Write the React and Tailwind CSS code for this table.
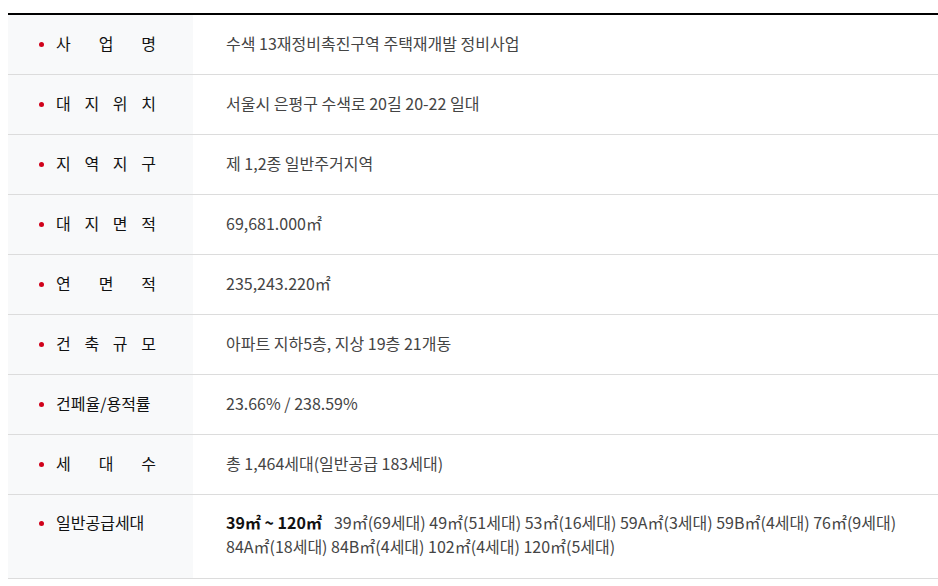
import React from "react";

const rows = [
  { label: ["사", "업", "명"], value: "수색 13재정비촉진구역 주택재개발 정비사업" },
  { label: ["대", "지", "위", "치"], value: "서울시 은평구 수색로 20길 20-22 일대" },
  { label: ["지", "역", "지", "구"], value: "제 1,2종 일반주거지역" },
  { label: ["대", "지", "면", "적"], value: "69,681.000㎡" },
  { label: ["연", "면", "적"], value: "235,243.220㎡" },
  { label: ["건", "축", "규", "모"], value: "아파트 지하5층, 지상 19층 21개동" },
  { label: ["건페율/용적률"], value: "23.66% / 238.59%" },
  { label: ["세", "대", "수"], value: "총 1,464세대(일반공급 183세대)" },
];

function Label({ parts, top }) {
  return (
    <div
      className={
        "border-b border-[#dcdcdc] bg-[#f8f9fa] flex items-start pl-[31px] pr-4 " +
        (top ? "pt-[15px] pb-[20px]" : "pt-[16px] pb-[19px]")
      }
    >
      <span className="w-[5px] h-[5px] rounded-full bg-[#d0021b] mt-[11px] mr-[12px] shrink-0" />
      <div
        className={
          "flex w-[100px] leading-[24px] text-[16px] text-[#111] " +
          (parts.length > 1 ? "justify-between" : "")
        }
      >
        {parts.map((p, i) => (
          <span key={i}>{p}</span>
        ))}
      </div>
    </div>
  );
}

export default function App() {
  return (
    <div
      className="pt-[13px] pl-2 bg-white min-h-[586px]"
      style={{ fontFamily: '"Noto Sans CJK KR", "Noto Sans", sans-serif' }}
    >
      <div className="border-t-2 border-black grid grid-cols-[185px_1fr]">
        {rows.map((r, i) => (
          <React.Fragment key={i}>
            <Label parts={r.label} />
            <div className="border-b border-[#dcdcdc] pl-[33px] pt-[16px] pb-[19px] text-[16px] leading-[24px] text-[#444]">
              {r.value}
            </div>
          </React.Fragment>
        ))}
        <Label parts={["일반공급세대"]} top />
        <div className="border-b border-[#dcdcdc] pl-[33px] pr-6 pt-[15px] pb-[20px] text-[16px] leading-[24px] text-[#444]">
          <span className="font-bold text-[#111] mr-[12px]">39㎡ ~ 120㎡</span>
          <span>
            39㎡(69세대) 49㎡(51세대) 53㎡(16세대) 59A㎡(3세대) 59B㎡(4세대) 76㎡(9세대) 84A㎡(18세대) 84B㎡(4세대) 102㎡(4세대) 120㎡(5세대)
          </span>
        </div>
      </div>
    </div>
  );
}
